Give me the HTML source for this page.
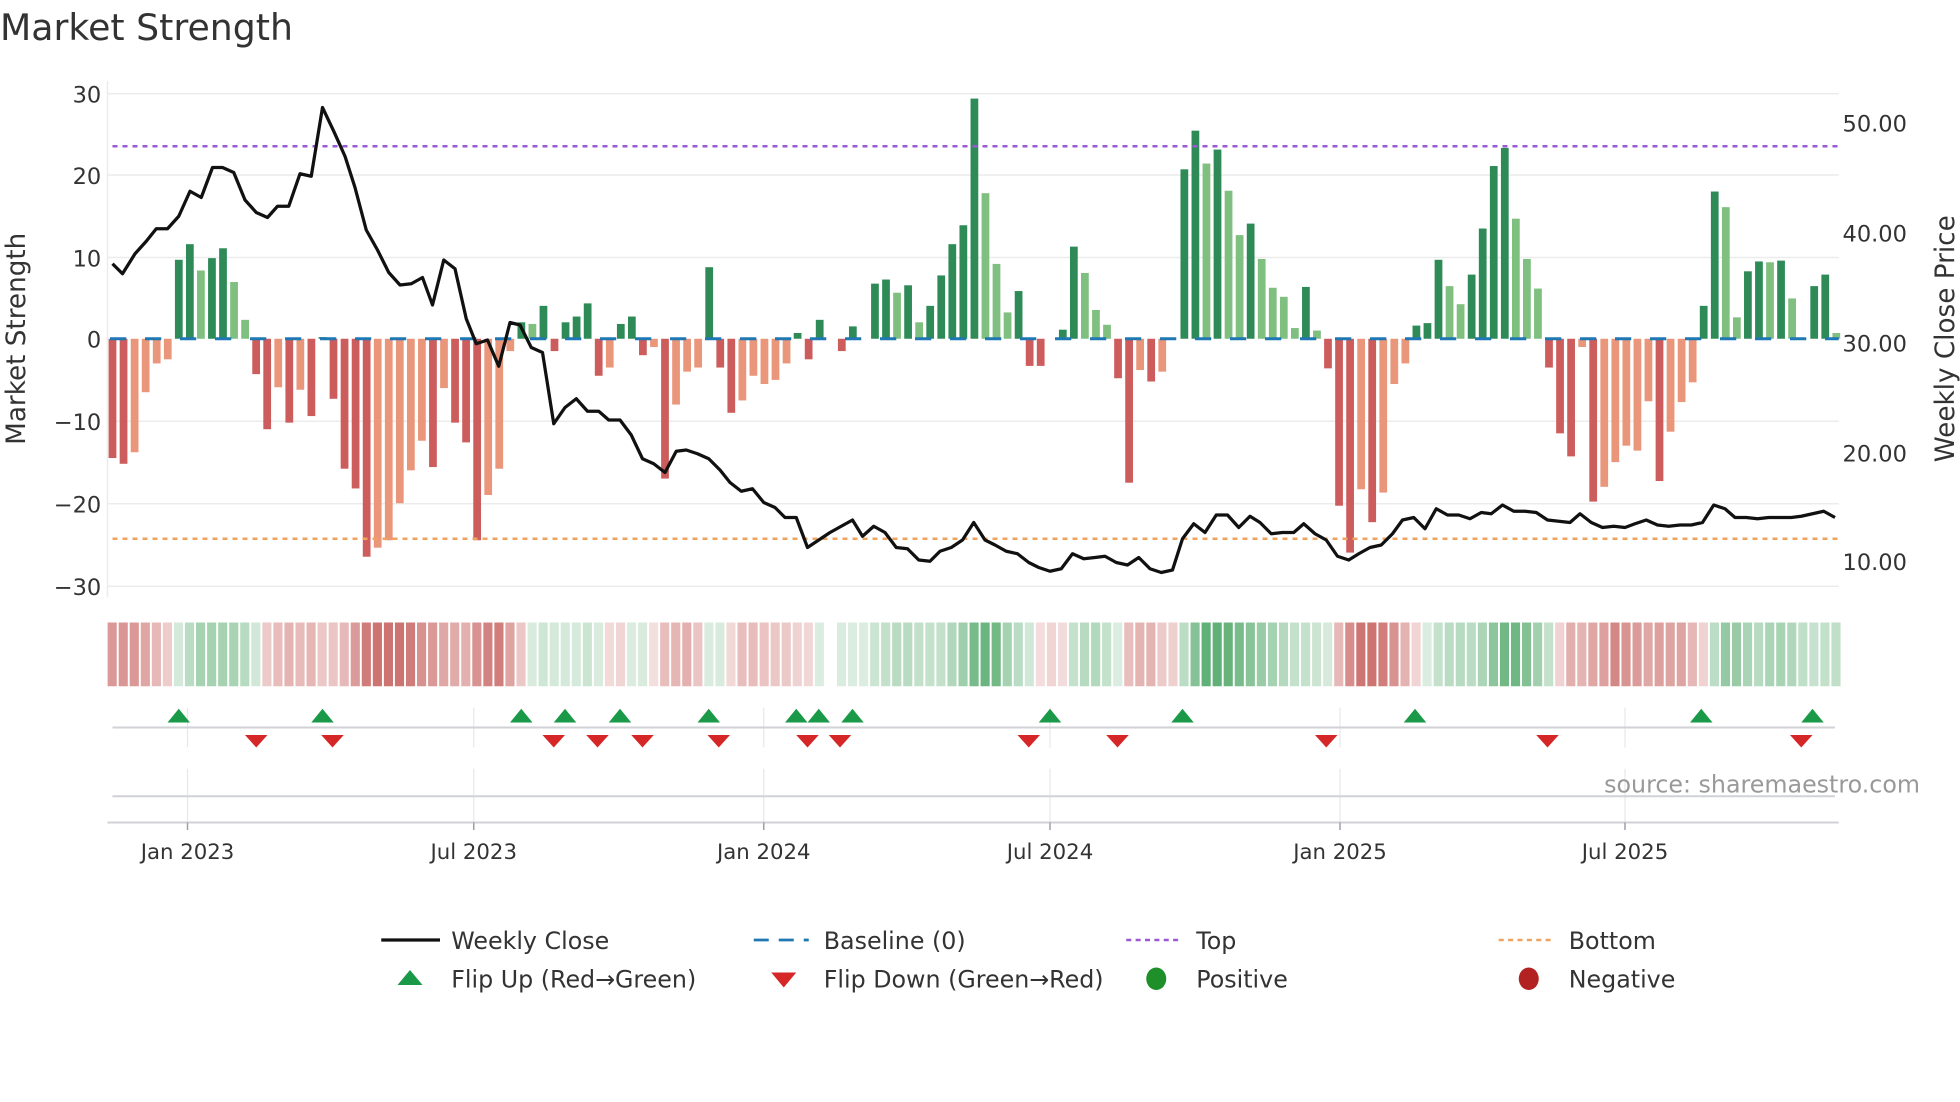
<!DOCTYPE html>
<html><head><meta charset="utf-8"><style>
html,body{margin:0;padding:0;background:#fff;width:1960px;height:1102px;overflow:hidden}
svg{display:block;font-family:"DejaVu Sans","Liberation Sans",sans-serif}
</style></head><body>
<svg id="c" width="1960" height="1102" viewBox="0 0 1568 881.6" xmlns="http://www.w3.org/2000/svg">
<text x="0" y="32" font-size="29" fill="#333">Market Strength</text>
<g id="grid" stroke="#ececec" stroke-width="1.2">
<line x1="86" x2="1471" y1="75" y2="75"/><line x1="86" x2="1471" y1="140" y2="140"/><line x1="86" x2="1471" y1="206" y2="206"/><line x1="86" x2="1471" y1="337" y2="337"/><line x1="86" x2="1471" y1="403" y2="403"/><line x1="86" x2="1471" y1="469" y2="469"/>
<line x1="86" x2="86" y1="65" y2="478"/>
</g>
<g font-size="18" fill="#333" text-anchor="end">
<text x="81" y="82">30</text><text x="81" y="147">20</text><text x="81" y="213">10</text><text x="81" y="278">0</text><text x="81" y="344">−10</text><text x="81" y="410">−20</text><text x="81" y="476">−30</text>
</g>
<g font-size="18" fill="#333">
<text x="1474" y="105">50.00</text><text x="1474" y="193">40.00</text><text x="1474" y="281">30.00</text><text x="1474" y="369">20.00</text><text x="1474" y="456">10.00</text>
</g>
<text transform="translate(20,271) rotate(-90)" font-size="21" fill="#333" text-anchor="middle">Market Strength</text>
<text transform="translate(1563,271) rotate(-90)" font-size="21" fill="#333" text-anchor="middle">Weekly Close Price</text>
<g id="bars"></g>
<line x1="88" x2="1471" y1="271" y2="271" stroke="#1f77b4" stroke-width="2.4" stroke-dasharray="13,15"/>
<line x1="90" x2="1471" y1="117" y2="117" stroke="#9b59d6" stroke-width="2" stroke-dasharray="4,4"/>
<line x1="90" x2="1471" y1="431" y2="431" stroke="#f0a35e" stroke-width="2" stroke-dasharray="4,4"/>
<polyline id="price" fill="none" stroke="#111" stroke-width="2.6" stroke-linejoin="round"/>
<g id="heat"></g>
<g stroke="#e6e8ee" stroke-width="1">
<line x1="150" x2="150" y1="566" y2="598"/><line x1="379" x2="379" y1="566" y2="598"/><line x1="611" x2="611" y1="566" y2="598"/><line x1="840" x2="840" y1="566" y2="598"/><line x1="1072" x2="1072" y1="566" y2="598"/><line x1="1300" x2="1300" y1="566" y2="598"/>
<line x1="150" x2="150" y1="615" y2="658"/><line x1="379" x2="379" y1="615" y2="658"/><line x1="611" x2="611" y1="615" y2="658"/><line x1="840" x2="840" y1="615" y2="658"/><line x1="1072" x2="1072" y1="615" y2="658"/><line x1="1300" x2="1300" y1="615" y2="658"/>
</g>
<line x1="90" x2="1468" y1="582" y2="582" stroke="#d0d2d6" stroke-width="1.6"/>
<line x1="90" x2="1468" y1="637" y2="637" stroke="#d0d2d6" stroke-width="1.6"/>
<line x1="86" x2="1471" y1="658" y2="658" stroke="#d0d2d6" stroke-width="1.6"/>
<g stroke="#9aa0aa" stroke-width="1.2">
<line x1="150" x2="150" y1="658" y2="664"/><line x1="379" x2="379" y1="658" y2="664"/><line x1="611" x2="611" y1="658" y2="664"/><line x1="840" x2="840" y1="658" y2="664"/><line x1="1072" x2="1072" y1="658" y2="664"/><line x1="1300" x2="1300" y1="658" y2="664"/>
</g>
<g id="marks"></g>
<text x="1536" y="634" font-size="19" fill="#999" text-anchor="end">source: sharemaestro.com</text>
<g font-size="17" fill="#333" text-anchor="middle">
<text x="150" y="687">Jan 2023</text><text x="379" y="687">Jul 2023</text><text x="611" y="687">Jan 2024</text><text x="840" y="687">Jul 2024</text><text x="1072" y="687">Jan 2025</text><text x="1300" y="687">Jul 2025</text>
</g>
<g font-size="19" fill="#333">
<line x1="305" x2="352" y1="752" y2="752" stroke="#111" stroke-width="2.6"/>
<text x="361" y="759">Weekly Close</text>
<line x1="603" x2="647" y1="752" y2="752" stroke="#1f77b4" stroke-width="2.2" stroke-dasharray="12,8"/>
<text x="659" y="759">Baseline (0)</text>
<line x1="901" x2="945" y1="752" y2="752" stroke="#9b59d6" stroke-width="2" stroke-dasharray="4,3.5"/>
<text x="957" y="759">Top</text>
<line x1="1199" x2="1243" y1="752" y2="752" stroke="#f0a35e" stroke-width="2" stroke-dasharray="4,3.5"/>
<text x="1255" y="759">Bottom</text>
<polygon points="318,788 338,788 328,776" fill="#1a9a48"/>
<text x="361" y="790">Flip Up (Red→Green)</text>
<polygon points="617,778 637,778 627,790" fill="#d62728"/>
<text x="659" y="790">Flip Down (Green→Red)</text>
<ellipse cx="925" cy="783" rx="8" ry="9" fill="#1f8f2a"/>
<text x="957" y="790">Positive</text>
<ellipse cx="1223" cy="783" rx="8" ry="9" fill="#b22222"/>
<text x="1255" y="790">Negative</text>
</g>
</svg>
<script>
var NS="http://www.w3.org/2000/svg";
var d="R-14.5 R-15.2 s-13.8 s-6.5 s-3 s-2.5 G9.6 G11.5 g8.3 G9.8 G11 g6.9 g2.3 R-4.3 R-11 s-5.9 R-10.2 s-6.2 R-9.4 G0.2 R-7.3 R-15.8 R-18.2 R-26.5 s-25.4 s-24.5 s-20 s-16 s-12.4 R-15.6 s-6 R-10.2 R-12.6 R-24.5 s-19 s-15.8 s-1.5 G2 g1.8 G4 R-1.5 G2 G2.7 G4.3 R-4.5 s-3.5 G1.8 G2.7 R-2 s-1 R-17 s-8 s-4 s-3.5 G8.7 R-3.5 R-9 s-7.5 s-4.5 s-5.5 s-5 s-3 G0.7 R-2.5 G2.3 Z0 R-1.5 G1.5 Z0 G6.7 G7.2 g5.6 G6.5 g2 G4 G7.7 G11.5 G13.8 G29.2 g17.7 g9.1 g3.2 G5.8 R-3.3 R-3.3 Z0 G1.1 G11.2 g8 g3.5 g1.7 R-4.8 R-17.5 s-3.8 R-5.2 s-4 Z0 G20.6 G25.3 g21.3 G23 g18 g12.6 G14 g9.7 g6.2 g5.1 g1.3 G6.3 g1 R-3.6 R-20.3 R-26 s-18.3 R-22.3 s-18.7 s-5.5 s-3 G1.6 G1.9 G9.6 g6.4 g4.2 G7.8 G13.4 G21 G23.2 g14.6 g9.7 g6.1 R-3.5 R-11.5 R-14.3 s-1 R-19.8 s-18 s-15 s-13 s-13.6 s-7.6 R-17.3 s-11.3 s-7.7 s-5.3 G4 G17.9 g16 g2.6 G8.2 G9.4 g9.3 G9.5 g4.9 Z0 G6.4 G7.8 g0.7".split(" ");
var col={G:"#2e8b57",g:"#7fbf7f",R:"#cd5c5c",s:"#e9967a",Z:"#fff"};
var bars=document.getElementById("bars"),heat=document.getElementById("heat");
var vals=d.map(function(t){return parseFloat(t.slice(1))});
for(var i=0;i<d.length;i++){
 var t=d[i][0],v=vals[i],x=90+i*8.84;
 if(t!="Z"&&Math.abs(v)>0.05){
  var r=document.createElementNS(NS,"rect");
  var y0=271,y1=271-v*6.58;
  r.setAttribute("x",x-3.1);r.setAttribute("width",6.2);
  r.setAttribute("y",Math.min(y0,y1));r.setAttribute("height",Math.max(Math.abs(y1-y0),0.6));
  r.setAttribute("fill",col[t]);bars.appendChild(r);
 }
 var s=0,n=0;for(var k=i-2;k<=i;k++){if(k>=0){s+=vals[k];n++;}}
 var a=s/n;
 if(i==65)continue;
 var it=Math.min(Math.abs(a)/22,1);it=0.18+0.62*it;
 var h=document.createElementNS(NS,"rect");
 h.setAttribute("x",x-3.9);h.setAttribute("width",7.3);h.setAttribute("y",498);h.setAttribute("height",51);
 h.setAttribute("fill",a>=0?"#3a9c55":"#c0504d");h.setAttribute("fill-opacity",it.toFixed(2));
 heat.appendChild(h);
}
var p=[90,211,98,219,108,203,117,193,125,183,134,183,143,173,152,153,161,158,170,134,178,134,187,138,196,160,205,170,214,174,222,165,231,165,240,139,249,141,258,86,267,105,276,125,284,150,293,184,302,200,311,218,320,228,329,227,338,222,346,244,355,208,364,215,373,255,381,275,390,272,399,293,408,258,416,260,425,278,434,282,443,339,452,326,461,319,470,329,479,329,487,336,496,336,505,348,514,367,523,371,532,378,541,361,549,360,558,363,567,367,576,376,584,386,593,393,602,391,611,402,620,406,628,414,637,414,646,438,655,432,664,426,673,421,682,416,690,429,699,421,708,426,717,438,726,439,735,448,744,449,752,441,761,438,770,432,779,418,788,432,796,436,805,441,814,443,823,450,831,454,840,457,849,455,858,443,867,447,876,446,884,445,893,450,902,452,911,446,920,455,929,458,938,456,946,431,955,419,964,426,973,412,982,412,991,422,1000,413,1008,418,1017,427,1026,426,1035,426,1043,419,1052,427,1061,432,1070,445,1079,448,1087,443,1096,438,1105,436,1114,427,1122,416,1131,414,1140,423,1149,407,1158,412,1167,412,1176,415,1185,410,1193,411,1202,404,1211,409,1220,409,1229,410,1238,416,1247,417,1256,418,1264,411,1273,418,1282,422,1291,421,1300,422,1308,419,1317,416,1326,420,1335,421,1344,420,1353,420,1362,418,1371,404,1380,407,1388,414,1397,414,1406,415,1415,414,1424,414,1433,414,1441,413,1450,411,1459,409,1468,414];
var ps="";for(var j=0;j<p.length;j+=2)ps+=p[j]+","+p[j+1]+" ";
document.getElementById("price").setAttribute("points",ps);
var mk=document.getElementById("marks");
[143,258,417,452,496,567,637,655,682,840,946,1132,1361,1450].forEach(function(x){
 var g=document.createElementNS(NS,"polygon");g.setAttribute("points",(x-9)+",578 "+(x+9)+",578 "+x+",567");g.setAttribute("fill","#1a9a48");mk.appendChild(g);});
[205,266,443,478,514,575,646,672,823,894,1061,1238,1441].forEach(function(x){
 var g=document.createElementNS(NS,"polygon");g.setAttribute("points",(x-9)+",588 "+(x+9)+",588 "+x+",598");g.setAttribute("fill","#d62728");mk.appendChild(g);});
</script>
</body></html>
